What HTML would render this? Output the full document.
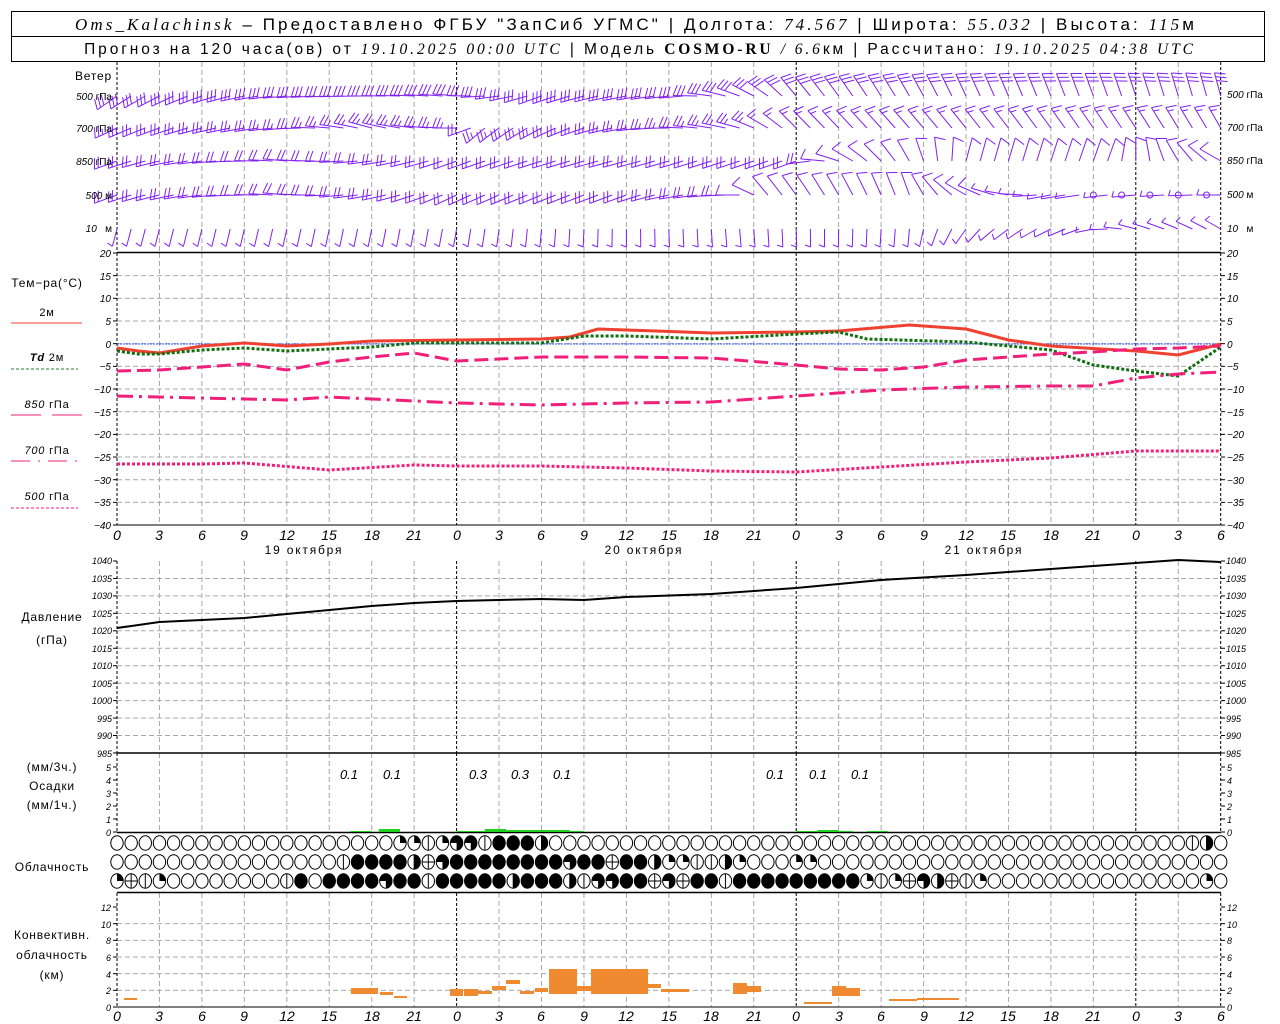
<!DOCTYPE html>
<html><head><meta charset="utf-8"><style>
html,body{margin:0;padding:0;background:#fff;width:1280px;height:1024px;overflow:hidden}
svg{display:block}
text{font-family:"Liberation Sans","DejaVu Sans",sans-serif;fill:#000}
.ax{font-size:10px;font-style:italic}
.lb{font-size:12px;letter-spacing:0.8px}
.tl{font-size:14px;font-style:italic}
</style></head><body>
<svg id="s" width="1280" height="1024" viewBox="0 0 1280 1024" xmlns="http://www.w3.org/2000/svg">
<rect x="0" y="0" width="1280" height="1024" fill="#fff"/>
<rect x="11.5" y="11.5" width="1253" height="50" fill="none" stroke="#000"/>
<line x1="11" y1="36.5" x2="1265" y2="36.5" stroke="#000"/>
<text x="636" y="30" text-anchor="middle" style="font-size:17px;letter-spacing:3.1px"><tspan font-family="Liberation Serif" font-style="italic">Oms_Kalachinsk</tspan> – Предоставлено ФГБУ "ЗапСиб УГМС" | Долгота: <tspan font-family="Liberation Serif" font-style="italic">74.567</tspan> | Широта: <tspan font-family="Liberation Serif" font-style="italic">55.032</tspan> | Высота: <tspan font-family="Liberation Serif" font-style="italic">115</tspan>м</text>
<text x="640" y="54" text-anchor="middle" style="font-size:15.5px;letter-spacing:2.9px">Прогноз на 120 часа(ов) от <tspan font-family="Liberation Serif" font-style="italic">19.10.2025 00:00 UTC</tspan>  | Модель <tspan font-family="Liberation Serif" font-weight="bold">COSMO-RU</tspan> <tspan font-family="Liberation Serif" font-style="italic">/ 6.6</tspan>км | Рассчитано: <tspan font-family="Liberation Serif" font-style="italic">19.10.2025 04:38 UTC</tspan></text>
<g id="grid"></g>
<g id="data"></g>
<g class="ax" text-anchor="end">
<text x="112" y="80" class="lb" style="font-style:normal;font-size:12px">Ветер</text>
<text x="112" y="100">500 <tspan font-style="normal">гПа</tspan></text><text x="112" y="132">700 <tspan font-style="normal">гПа</tspan></text><text x="112" y="165">850 <tspan font-style="normal">гПа</tspan></text><text x="112" y="199">500 <tspan font-style="normal">м</tspan></text><text x="112" y="232">10 &#160; <tspan font-style="normal">м</tspan></text>
</g>
<g class="ax">
<text x="1227" y="98">500 <tspan font-style="normal">гПа</tspan></text><text x="1227" y="131">700 <tspan font-style="normal">гПа</tspan></text><text x="1227" y="164">850 <tspan font-style="normal">гПа</tspan></text><text x="1227" y="198">500 <tspan font-style="normal">м</tspan></text><text x="1227" y="232">10 &#160; <tspan font-style="normal">м</tspan></text>
</g>
<g class="ax" text-anchor="end">
<text x="111" y="257">20</text><text x="111" y="280">15</text><text x="111" y="302">10</text><text x="111" y="325">5</text><text x="111" y="348">0</text><text x="111" y="370">−5</text><text x="111" y="393">−10</text><text x="111" y="416">−15</text><text x="111" y="438">−20</text><text x="111" y="461">−25</text><text x="111" y="484">−30</text><text x="111" y="506">−35</text><text x="111" y="529">−40</text>
</g>
<g class="ax">
<text x="1227" y="257">20</text><text x="1227" y="280">15</text><text x="1227" y="302">10</text><text x="1227" y="325">5</text><text x="1227" y="348">0</text><text x="1227" y="370">−5</text><text x="1227" y="393">−10</text><text x="1227" y="416">−15</text><text x="1227" y="438">−20</text><text x="1227" y="461">−25</text><text x="1227" y="484">−30</text><text x="1227" y="506">−35</text><text x="1227" y="529">−40</text>
</g>
<g class="lb" text-anchor="middle">
<text x="47" y="287">Тем−ра(°С)</text>
<text x="47" y="316" style="font-size:11px">2м</text>
<text x="47" y="361" style="font-size:11px"><tspan font-style="italic" font-weight="bold">Td</tspan>  2м</text>
<text x="47" y="408" style="font-size:11px"><tspan font-style="italic">850</tspan> гПа</text>
<text x="47" y="454" style="font-size:11px"><tspan font-style="italic">700</tspan> гПа</text>
<text x="47" y="500" style="font-size:11px"><tspan font-style="italic">500</tspan> гПа</text>
</g>
<line x1="11" y1="323" x2="82" y2="323" stroke="#f04030" stroke-width="1"/>
<line x1="11" y1="369" x2="78" y2="369" stroke="#208020" stroke-dasharray="3,2"/>
<line x1="11" y1="415" x2="41" y2="415" stroke="#f0207a"/><line x1="52" y1="415" x2="82" y2="415" stroke="#f0207a"/>
<line x1="11" y1="461" x2="82" y2="461" stroke="#f0207a" stroke-dasharray="19,8,2,8"/>
<line x1="11" y1="508" x2="78" y2="508" stroke="#f0207a" stroke-dasharray="3,2"/>
<g class="tl" text-anchor="middle">
<text x="117" y="540">0</text><text x="159" y="540">3</text><text x="202" y="540">6</text><text x="244" y="540">9</text><text x="287" y="540">12</text><text x="329" y="540">15</text><text x="372" y="540">18</text><text x="414" y="540">21</text><text x="457" y="540">0</text><text x="499" y="540">3</text><text x="541" y="540">6</text><text x="584" y="540">9</text><text x="626" y="540">12</text><text x="669" y="540">15</text><text x="711" y="540">18</text><text x="754" y="540">21</text><text x="796" y="540">0</text><text x="839" y="540">3</text><text x="881" y="540">6</text><text x="924" y="540">9</text><text x="966" y="540">12</text><text x="1008" y="540">15</text><text x="1051" y="540">18</text><text x="1093" y="540">21</text><text x="1136" y="540">0</text><text x="1178" y="540">3</text><text x="1221" y="540">6</text>
</g>
<g class="lb" text-anchor="middle" style="letter-spacing:1.8px">
<text x="304" y="554">19 октября</text><text x="644" y="554">20 октября</text><text x="984" y="554">21 октября</text>
</g>
<g class="tl" text-anchor="middle">
<text x="117" y="1021">0</text><text x="159" y="1021">3</text><text x="202" y="1021">6</text><text x="244" y="1021">9</text><text x="287" y="1021">12</text><text x="329" y="1021">15</text><text x="372" y="1021">18</text><text x="414" y="1021">21</text><text x="457" y="1021">0</text><text x="499" y="1021">3</text><text x="541" y="1021">6</text><text x="584" y="1021">9</text><text x="626" y="1021">12</text><text x="669" y="1021">15</text><text x="711" y="1021">18</text><text x="754" y="1021">21</text><text x="796" y="1021">0</text><text x="839" y="1021">3</text><text x="881" y="1021">6</text><text x="924" y="1021">9</text><text x="966" y="1021">12</text><text x="1008" y="1021">15</text><text x="1051" y="1021">18</text><text x="1093" y="1021">21</text><text x="1136" y="1021">0</text><text x="1178" y="1021">3</text><text x="1221" y="1021">6</text>
</g>
<g class="ax" text-anchor="end" style="font-size:9px">
<text x="112" y="564">1040</text><text x="112" y="582">1035</text><text x="112" y="599">1030</text><text x="112" y="617">1025</text><text x="112" y="634">1020</text><text x="112" y="652">1015</text><text x="112" y="669">1010</text><text x="112" y="687">1005</text><text x="112" y="704">1000</text><text x="112" y="722">995</text><text x="112" y="739">990</text><text x="112" y="757">985</text>
</g>
<g class="ax" style="font-size:9px">
<text x="1226" y="564">1040</text><text x="1226" y="582">1035</text><text x="1226" y="599">1030</text><text x="1226" y="617">1025</text><text x="1226" y="634">1020</text><text x="1226" y="652">1015</text><text x="1226" y="669">1010</text><text x="1226" y="687">1005</text><text x="1226" y="704">1000</text><text x="1226" y="722">995</text><text x="1226" y="739">990</text><text x="1226" y="757">985</text>
</g>
<g class="lb" text-anchor="middle">
<text x="52" y="621">Давление</text><text x="52" y="644">(гПа)</text>
<text x="52" y="771">(мм/3ч.)</text><text x="52" y="790">Осадки</text><text x="52" y="809">(мм/1ч.)</text>
<text x="52" y="871">Облачность</text>
<text x="52" y="939">Конвективн.</text><text x="52" y="959">облачность</text><text x="52" y="979">(км)</text>
</g>
<g class="ax" text-anchor="end" style="font-size:9px">
<text x="111" y="771">5</text><text x="111" y="784">4</text><text x="111" y="797">3</text><text x="111" y="810">2</text><text x="111" y="823">1</text><text x="111" y="836">0</text>
</g>
<g class="ax" style="font-size:9px">
<text x="1227" y="771">5</text><text x="1227" y="784">4</text><text x="1227" y="797">3</text><text x="1227" y="810">2</text><text x="1227" y="823">1</text><text x="1227" y="836">0</text>
</g>
<g class="tl" text-anchor="middle" style="font-size:13px">
<text x="349" y="779">0.1</text><text x="392" y="779">0.1</text><text x="478" y="779">0.3</text><text x="520" y="779">0.3</text><text x="562" y="779">0.1</text><text x="775" y="779">0.1</text><text x="818" y="779">0.1</text><text x="860" y="779">0.1</text>
</g>
<g class="ax" text-anchor="end" style="font-size:9px">
<text x="111" y="911">12</text><text x="111" y="928">10</text><text x="111" y="944">8</text><text x="111" y="961">6</text><text x="111" y="978">4</text><text x="111" y="994">2</text><text x="111" y="1011">0</text>
</g>
<g class="ax" style="font-size:9px">
<text x="1227" y="911">12</text><text x="1227" y="928">10</text><text x="1227" y="944">8</text><text x="1227" y="961">6</text><text x="1227" y="978">4</text><text x="1227" y="994">2</text><text x="1227" y="1011">0</text>
</g>
</svg>
<script>
(function(){
var NS="http://www.w3.org/2000/svg";
var G=document.getElementById('grid'),D=document.getElementById('data');
function el(p,n,a){var e=document.createElementNS(NS,n);for(var k in a)e.setAttribute(k,a[k]);p.appendChild(e);return e;}
function X(h){return 117+14.15*h;}
var gray="#a8a8a8";
function hl(y,x1,x2,st,dash,w){var a={x1:x1,y1:y,x2:x2,y2:y,stroke:st,'stroke-width':w||1};if(dash)a['stroke-dasharray']=dash;el(G,'line',a);}
for(var i=1;i<12;i++)hl(253+22.67*i,117,1221,gray,"5,3");
for(var i=1;i<11;i++)hl(561+17.45*i,117,1221,gray,"5,3");
for(var i=1;i<6;i++)hl(1007-16.67*i,117,1221,gray,"5,3");
var panels=[[62,252],[253,525],[561,753],[753,832],[893,1007]];
for(var h=0;h<=78;h+=3){
 var dark=(h%24==0)||h==78;
 panels.forEach(function(p){el(G,'line',{x1:X(h),y1:p[0],x2:X(h),y2:p[1],stroke:dark?"#000":gray,'stroke-dasharray':dark?"3,2":"5,3"});});
}
hl(252.5,117,1221,"#000",null,1.5);hl(525,117,1221,"#000");
hl(753,117,1221,"#000",null,1.5);hl(832.5,117,1221,"#000",null,1.5);hl(892.5,117,1221,"#000",null,1.5);hl(1007,117,1221,"#000");
function ticks(y0,step,n){for(var i=0;i<n;i++){var y=y0+step*i;el(G,'line',{x1:113,y1:y,x2:117,y2:y,stroke:'#000'});el(G,'line',{x1:1221,y1:y,x2:1225,y2:y,stroke:'#000'});}}
ticks(253,22.67,13);ticks(561,17.45,12);ticks(767,13,6);ticks(907,16.67,7);
el(D,'line',{x1:117,y1:344,x2:1221,y2:344,stroke:'#3050ff','stroke-width':1,'stroke-dasharray':'2,1'});
function line(arr,st,w,dash){var s=arr.map(function(p){return X(p[0]).toFixed(1)+','+p[1];}).join(' ');var a={points:s,fill:'none',stroke:st,'stroke-width':w};if(dash)a['stroke-dasharray']=dash;el(D,'polyline',a);}
line([[0,348],[1.5,351],[3,353],[6,346],[9,343],[12,346],[15,344],[18,341],[24,340],[30,339],[32,337],[34,329],[36,330],[42,333],[48,332],[51,331],[56,325],[60,329],[63,340],[66,346],[72,351],[75,355],[78,344]],'#f04030',3);
line([[0,351],[1.5,354],[3,354],[6,350],[9,348],[12,351],[15,349],[18,347],[21,343],[24,343],[30,343],[33,336],[36,336],[42,339],[48,334],[51,332],[53,339],[60,342],[66,350],[69,365],[72,371],[75,376],[78,347]],'#107010',3,'3,2');
line([[0,371],[3,370],[6,367],[9,364],[12,370],[15,362],[18,357],[21,353],[24,361],[30,357],[36,357],[42,358],[48,365],[51,369],[54,370],[57,367],[60,360],[63,357],[66,354],[69,352],[72,349],[75,348],[78,346]],'#f0207a',3,'14,6');
line([[0,396],[6,398],[12,400],[15,397],[18,399],[24,403],[30,405],[36,403],[42,402],[48,396],[54,390],[60,387],[66,386],[69,386],[72,378],[75,374],[78,372]],'#f0207a',3,'16,6,3,6');
line([[0,464],[6,464],[9,463],[15,470],[21,465],[24,466],[30,466],[36,468],[42,471],[48,472],[54,467],[60,462],[66,458],[72,451],[78,451]],'#f0207a',3,'3,2');
line([[0,628],[3,622],[6,620],[9,618],[12,614],[15,610],[18,606],[21,603],[24,601],[30,599],[33,600],[36,597],[42,594],[48,588],[54,580],[60,575],[66,569],[72,563],[75,560],[78,562]],'#000',2);
[[16.5,18,1],[18.5,20,3],[24,26,1],[26,27.5,3],[27.5,30,2],[30,32,2],[32,33,1],[48,49.5,1],[49.5,51,2],[51,52,1],[53,54.5,1]].forEach(function(b){el(D,'rect',{x:X(b[0]),y:832-b[2],width:X(b[1])-X(b[0]),height:b[2],fill:'#20d020'});});
[[124,137,998,1000],[351,365,988,994],[365,378,988,994],[380,393,992,995],[394,407,996,998],[450,463,989,996],[464,478,989,996],[478,492,991,994],[492,506,986,990],[506,520,980,984],[520,534,991,994],[535,548,988,992],[549,577,969,994],[577,591,986,991],[591,606,969,994],[606,620,969,994],[620,633,969,994],[633,648,969,994],[648,661,984,988],[661,689,989,992],[733,747,983,994],[747,761,986,992],[804,832,1002,1004],[832,846,986,996],[846,860,988,996],[889,917,999,1001],[917,945,998,1000],[945,959,998,1000]].forEach(function(b){el(D,'rect',{x:b[0],y:b[2],width:b[1]-b[0],height:b[3]-b[2],fill:'#f08a30'});});
var rows=[
"oooooooooooooooooooo"+"qqvqttvfffh"+"ooooooooooooooooooooooooooooooooooooooooooooo"+"vho",
"oooooooooooooooo"+"v"+"ffff"+"hxt"+"ffffffff"+"t"+"ff"+"x"+"ff"+"hqqvvhq"+"ooo"+"qq"+"ooooooooooooooooooooooooooooo",
"qxvq"+"oooooooo"+"vfo"+"ffff"+"t"+"ff"+"v"+"fffff"+"h"+"fff"+"hvttffxtxffv"+"fffffffff"+"qvqxthxvq"+"ooooooooooooooo"+"qo"];
var ry=[843,862,881];
rows.forEach(function(r,ri){for(var h=0;h<79&&h<r.length;h++){var cx=X(h),cy=ry[ri],c=r[h],R=6.2,RY=7.2;
 var g=el(D,'g',{});
 if(c=='f'){el(g,'ellipse',{cx:cx,cy:cy,rx:R,ry:RY,fill:'#000',stroke:'#000'});continue;}
 el(g,'ellipse',{cx:cx,cy:cy,rx:R,ry:RY,fill:'#fff',stroke:'#000'});
 if(c=='q')el(g,'path',{d:'M'+cx+','+cy+'V'+(cy-RY)+'A'+R+','+RY+' 0 0 1 '+(cx+R)+','+cy+'Z',fill:'#000'});
 if(c=='t')el(g,'path',{d:'M'+cx+','+cy+'H'+(cx-R)+'A'+R+','+RY+' 0 1 1 '+cx+','+(cy+RY)+'Z',fill:'#000'});
 if(c=='h')el(g,'path',{d:'M'+cx+','+(cy-RY)+'A'+R+','+RY+' 0 0 1 '+cx+','+(cy+RY)+'Z',fill:'#000'});
 if(c=='v'||c=='x'||c=='h')el(g,'line',{x1:cx,y1:cy-RY,x2:cx,y2:cy+RY,stroke:'#000'});
 if(c=='x')el(g,'line',{x1:cx-R,y1:cy,x2:cx+R,y2:cy,stroke:'#000'});
}});
function interp(k,h){for(var i=1;i<k.length;i++){if(h<=k[i][0]){var a=k[i-1],b=k[i];var t=(h-a[0])/(b[0]-a[0]);var d=b[1]-a[1];if(d>180)d-=360;if(d<-180)d+=360;return a[1]+t*d;}}return k[k.length-1][1];}
var lev=[
 {y:96,k:[[0,235],[12,265],[24,275],[30,250],[40,265],[44,290],[48,320],[60,335],[78,345]],s:function(h){return 3;}},
 {y:128,k:[[0,245],[12,265],[18,285],[24,270],[26,230],[36,260],[44,285],[48,315],[78,330]],s:function(h){return h<46?2.5:1.5;}},
 {y:161,k:[[0,250],[12,275],[24,250],[36,255],[48,250],[52,300],[56,330],[60,15],[70,20],[78,300]],s:function(h){return h<50?2:1;}},
 {y:195,k:[[0,250],[12,275],[24,245],[36,250],[44,270],[46,320],[56,340],[60,300],[66,260],[78,270]],s:function(h){return h<44?2:(h<62?1:0.5);}},
 {y:229,k:[[0,195],[24,190],[36,180],[44,175],[56,185],[62,230],[68,250],[72,285],[78,300]],s:function(h){return 0.5;}}
];
var P='#8020f0';
lev.forEach(function(L,li){for(var h=0;h<=78;h++){
 var x=X(h),y=L.y,th=interp(L.k,h)*Math.PI/180,sp=L.s(h);
 if(li==3&&(h==69||h==71||h==73||h==75||h==77)){el(D,'circle',{cx:x,cy:y,r:3,fill:'none',stroke:P});continue;}
 var ux=Math.sin(th),uy=-Math.cos(th),Ls=(li==4?18:24);
 var ex=x+ux*Ls,ey=y+uy*Ls;
 el(D,'line',{x1:x,y1:y,x2:ex,y2:ey,stroke:P});
 var px=-uy,py=ux;
 var n=Math.floor(sp),half=sp-n>0.1;
 for(var f=0;f<n+(half?1:0);f++){
  var bx=ex-ux*4*f,by=ey-uy*4*f,len=(f>=n)?6:11;
  el(D,'line',{x1:bx,y1:by,x2:bx+(px*0.94-ux*0.35)*len,y2:by+(py*0.94-uy*0.35)*len,stroke:P});
 }
}});
})();
</script>
</body></html>
